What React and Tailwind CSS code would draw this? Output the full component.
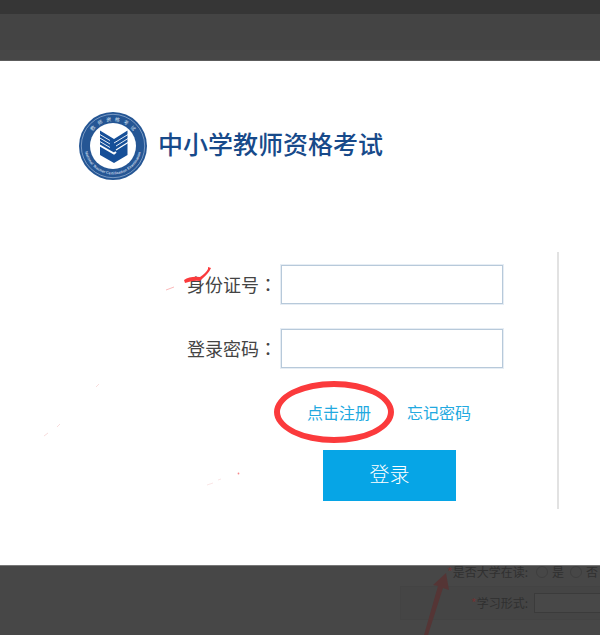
import { useState } from "react";

const Logo = () => (
  <svg viewBox="0 0 70 70" className="size-[70px] shrink-0" aria-hidden="true">
    <defs>
      <path id="ringTop" d="M10 35 A25 25 0 0 1 60 35" />
      <path id="ringBottom" d="M6.500 35 A28.500 28.500 0 0 0 63.500 35" />
    </defs>
    <circle cx="35" cy="35" r="34" fill="#255694" />
    <circle cx="35" cy="35" r="31.7" fill="none" stroke="#8fabcf" strokeWidth="0.8" />
    <circle cx="35" cy="35" r="23" fill="#fff" />
    <text fill="#d5e0ee" fontSize="5" className="font-['Noto_Sans_CJK_SC',sans-serif]">
      <textPath href="#ringTop" startOffset="50%" textAnchor="middle">
        教&#160;&#160;&#160;师&#160;&#160;&#160;资&#160;&#160;&#160;格&#160;&#160;&#160;考&#160;&#160;&#160;试
      </textPath>
    </text>
    <text fill="#c3d2e6" fontSize="3.8" fontWeight="bold" className="font-['Liberation_Sans',sans-serif]">
      <textPath href="#ringBottom" startOffset="50%" textAnchor="middle">
        National Teacher Certification Examination
      </textPath>
    </text>
    <path d="M22 19.500 L36 28 L49.500 19.500 V44 L36 52 L22 44 Z" fill="#164f98" />
    <g stroke="#fff" fill="none">
      <path d="M21 23 L32 29.500" strokeWidth="0.9" />
      <path d="M21 26.500 L32 33" strokeWidth="0.9" />
      <path d="M21 30 L32 36.500" strokeWidth="0.9" />
      <path d="M21 34 L36 42.500 L38 41" strokeWidth="2" />
      <path d="M36 32 L50 23.500" strokeWidth="0.9" />
      <path d="M38 35 L50 27.500" strokeWidth="0.9" />
      <path d="M38 39 L50 31.500" strokeWidth="1.2" />
    </g>
  </svg>
);

const Field = ({ id, label, type, value, onChange }) => (
  <div className="flex items-center">
    <label htmlFor={id} className="w-[94px] shrink-0 whitespace-nowrap pb-0.5 text-lg text-[#444]">
      {label}
      <span className="font-['Noto_Sans_CJK_TC',sans-serif]">：</span>
    </label>
    <input
      id={id}
      type={type}
      value={value}
      onChange={onChange}
      className="h-[39px] w-[222px] border border-[#b7c9da] bg-white px-2 text-base ring-1 ring-[#e6edf4] outline-none"
    />
  </div>
);

export default function App() {
  const [formData, setFormData] = useState({ idNumber: "", password: "" });

  const handleChange = (e) => {
    setFormData({ ...formData, [e.target.id]: e.target.value });
  };

  return (
    <div className="flex min-h-screen flex-col overflow-x-hidden bg-[#474747] font-['Noto_Sans_CJK_SC',sans-serif]">
      <div className="h-3.5 bg-[#363636]" />
      <div className="h-9 bg-[#444]" />
      <div className="h-[11px] border-b border-[#5c5c5c] bg-[#474747]" />

      <main className="relative bg-white pt-[50px] pb-14">
        <header className="flex items-center gap-2.5 pl-[78px]">
          <Logo />
          <h1 className="whitespace-nowrap pb-1.5 text-[25px] leading-9 font-medium text-[#174a8a]">中小学教师资格考试</h1>
        </header>

        <form
          onSubmit={(e) => e.preventDefault()}
          className="mt-[71px] mr-[41px] border-r-2 border-[#e2e2e2] pt-[13px] pb-2 pl-[187px]"
        >
          <div className="flex flex-col gap-[25px]">
            <Field id="idNumber" label="身份证号" type="text" value={formData.idNumber} onChange={handleChange} />
            <Field id="password" label="登录密码" type="password" value={formData.password} onChange={handleChange} />
          </div>
          <div className="mt-8 flex gap-9 pl-[120px] text-base leading-6 text-[#22a9e0]">
            <a href="#register" className="relative whitespace-nowrap">
              点击注册
              <span className="pointer-events-none absolute -inset-y-[19px] -right-[23px] -left-[33px] rounded-[50%] border-6 border-[#fb3a3c]" />
            </a>
            <a href="#forgot" className="whitespace-nowrap">忘记密码</a>
          </div>
          <button
            type="submit"
            className="mt-[26px] ml-[136px] block h-[51px] w-[133px] bg-[#06a5e6] pb-1 text-xl font-light text-white"
          >
            登录
          </button>
        </form>

        {/* pen strokes */}
        <svg width="260" height="504" viewBox="0 61 260 504" className="pointer-events-none absolute top-0 left-0" aria-hidden="true">
          <path d="M184 280 Q190 276 200 277 Q206 273 208 269 L208 267 L211 268 Q209 273 202 279 L200 281 Q194 280 185 283 Z" fill="#fb3a3c" />
          <path d="M166 290 L174 287" stroke="#fbb9ba" strokeWidth="1" />
          <path d="M44 436 L48 433 M57 427 L60 424 M96 387 L99 384" stroke="#f8dcdc" strokeWidth="1" />
          <path d="M207 485 L213 483 M218 480 L221 479" stroke="#fae6e6" strokeWidth="1" />
          <circle cx="238.500" cy="473.500" r="0.900" fill="#f78a8c" />
        </svg>
      </main>

      <section className="relative flex-1 border-t border-[#777] text-xs text-[#303030]">
        <div className="ml-[400px] flex h-5 items-start leading-3 whitespace-nowrap">
          <span className="w-32 shrink-0 text-right">
            <span className="text-[#703434]">*</span>是否大学在读:
          </span>
          <label className="ml-2 flex items-center gap-1">
            <input type="radio" name="enrolled" className="size-3 appearance-none rounded-full border border-[#3e3e3e]" />
            是
          </label>
          <label className="ml-1.5 flex items-center gap-1">
            <input type="radio" name="enrolled" className="size-3 appearance-none rounded-full border border-[#3e3e3e]" />
            否
          </label>
        </div>
        <div className="ml-[400px] flex h-[34px] items-center border border-r-0 border-[#434343] bg-[#454545]">
          <label htmlFor="studyMode" className="w-[127px] shrink-0 text-right">
            <span className="text-[#703434]">*</span>学习形式:
          </label>
          <input id="studyMode" className="ml-1.5 h-5 min-w-0 flex-1 border border-r-0 border-[#3b3b3b] bg-[#484848] outline-none" />
        </div>
        <svg width="30" height="62" viewBox="0 0 30 62" className="pointer-events-none absolute top-[7px] left-[422px]" aria-hidden="true">
          <path d="M24 0 L27 17 L21 15 L6 62 L2 62 L16 13 L11 12 Z" fill="#553535" />
        </svg>
      </section>
    </div>
  );
}
